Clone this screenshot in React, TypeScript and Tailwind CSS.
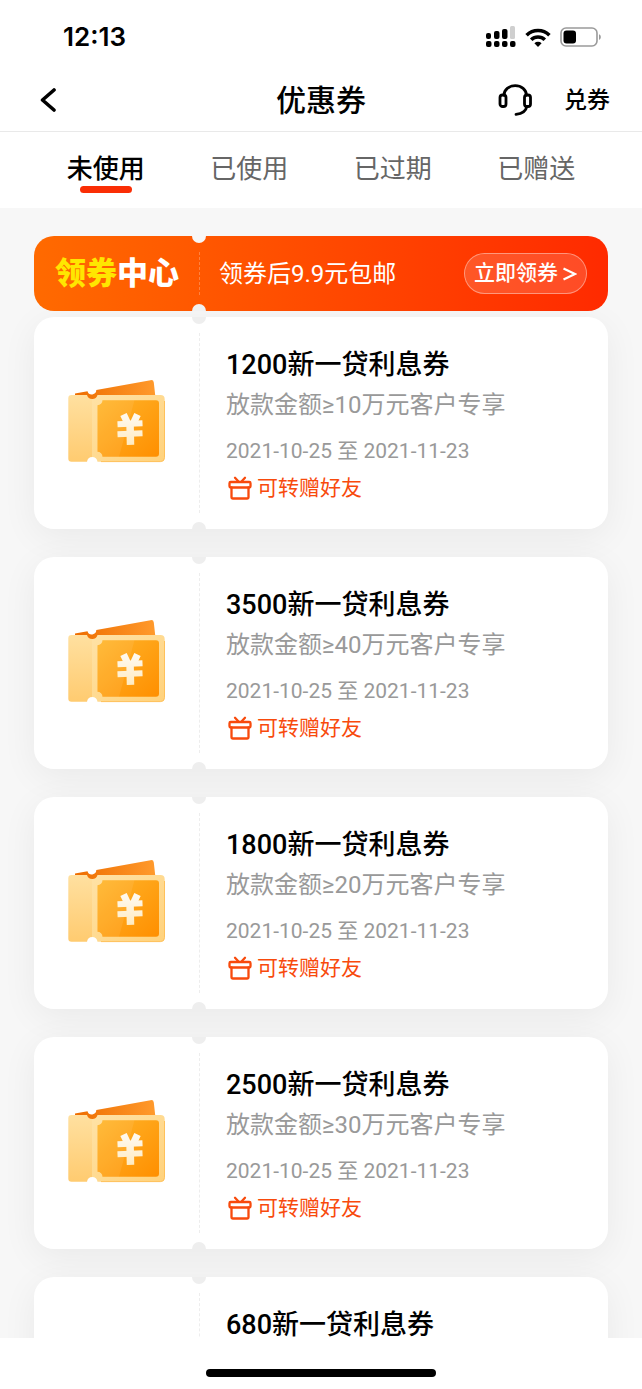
import { useState } from 'react';

const tabs = ['未使用', '已使用', '已过期', '已赠送'];

const coupons = [
  { amount: 1200, limit: 10, start: '2021-10-25', end: '2021-11-23' },
  { amount: 3500, limit: 40, start: '2021-10-25', end: '2021-11-23' },
  { amount: 1800, limit: 20, start: '2021-10-25', end: '2021-11-23' },
  { amount: 2500, limit: 30, start: '2021-10-25', end: '2021-11-23' },
  { amount: 680 }
];

type Coupon = { amount: number; limit?: number; start?: string; end?: string };

const StatusBar = () => (
  <div className="flex h-[74px] shrink-0 items-center justify-between pl-[63px] pr-10">
    <span className="font-['Inter'] text-[26px] font-semibold leading-8">12:13</span>
    <div className="flex items-center gap-[9px]">
      <svg width="31" height="22" viewBox="0 0 31 22" aria-hidden="true">
        <rect x="1" y="7" width="5" height="6" rx="2" />
        <rect x="9" y="5" width="5.5" height="8" rx="2" />
        <rect x="17" y="3" width="5.5" height="10" rx="2" />
        <rect x="25" y="0" width="5" height="13" rx="1.5" fill="#cfcfcf" />
        <rect x="1" y="15" width="5.5" height="6" rx="2" />
        <rect x="9" y="15" width="5.5" height="6" rx="2" />
        <rect x="17" y="15" width="5.5" height="6" rx="2" />
        <rect x="25" y="15" width="5.5" height="6" rx="2" />
      </svg>
      <svg width="26" height="19" viewBox="0 0 26 19" fill="none" stroke="#000" strokeWidth="3.6" aria-hidden="true">
        <path d="M1.6 7.2a16.3 16.3 0 0 1 22.8 0" />
        <path d="M6.2 11.8a9.7 9.7 0 0 1 13.6 0" />
        <path d="M13 19l-3.6-3.8a5.1 5.1 0 0 1 7.2 0z" fill="#000" stroke="none" />
      </svg>
      <svg width="42" height="20" viewBox="0 0 42 20" aria-hidden="true">
        <rect x="1" y="1" width="36" height="18" rx="5" fill="none" stroke="#9a9a9a" strokeWidth="1.6" />
        <rect x="3.5" y="3.5" width="12.5" height="13" rx="3" />
        <path d="M39 7.2c2.4.8 2.4 4.8 0 5.6z" fill="#9a9a9a" />
      </svg>
    </div>
  </div>
);

const Header = () => (
  <header className="grid h-[58px] shrink-0 grid-cols-[1fr_auto_1fr] items-center border-b border-[#e9e9e9] px-8 pb-1">
    <button aria-label="返回" className="justify-self-start pl-[6px]">
      <svg width="20" height="26" viewBox="0 1 20 26" fill="none" stroke="#000" strokeWidth="3.6" strokeLinecap="round" strokeLinejoin="round">
        <path d="M16 3L4.5 13L16 23" />
      </svg>
    </button>
    <h1 className="text-[30px] font-medium leading-10">优惠券</h1>
    <div className="flex items-center gap-8 justify-self-end">
      <button aria-label="客服">
        <svg width="34" height="34" viewBox="0 0 34 34" fill="none" stroke="#000" strokeWidth="2.8" strokeLinecap="round" strokeLinejoin="round">
          <rect x="2" y="11" width="6" height="11.5" rx="2.6" />
          <rect x="26.5" y="11" width="6" height="11.5" rx="2.6" />
          <path d="M6 11.2a11.2 9.6 0 0 1 22.4 0" />
          <path d="M28.8 22.5c-.8 4.500-4.800 7.200-10.800 7.800" />
        </svg>
      </button>
      <button className="text-[23px] font-medium leading-8">兑券</button>
    </div>
  </header>
);

const Divider = ({ line, top, bottom }: { line: string; top: string; bottom: string }) => (
  <>
    <span className={`absolute inset-y-4 left-[165px] border-l border-dashed ${line}`} />
    <span className={`absolute left-[158px] top-0 h-[7px] w-[14px] rounded-b-full ${top}`} />
    <span className={`absolute bottom-0 left-[158px] h-[7px] w-[14px] rounded-t-full ${bottom}`} />
  </>
);

const Banner = () => (
  <section className="relative z-10 flex h-[75px] items-center rounded-[20px] bg-linear-to-r/srgb from-[#ff6a00] to-[#ff2a00] px-[21px] text-white">
    <Divider line="border-white/25" top="bg-[#f7f7f7]" bottom="bg-[#f1f1f1]" />
    <h2 className="w-[164px] shrink-0 text-[31px] font-black leading-10">
      <span className="text-[#ffe600]">领券</span>中心
    </h2>
    <p className="flex-1 text-2xl">领券后9.9元包邮</p>
    <button className="flex h-[41px] items-center gap-[5px] rounded-full border border-white/40 bg-white/15 px-[9px] text-[21px] font-medium">
      立即领券
      <svg width="14" height="14" viewBox="0 0 14 14" fill="none" stroke="currentColor" strokeWidth="2.2" aria-hidden="true">
        <path d="M0.5 1.5L12 7L0.5 12.5" />
      </svg>
    </button>
  </section>
);

const TicketIcon = () => (
  <svg width="98" height="84" viewBox="0 0 98 84" aria-hidden="true">
    <defs>
      <linearGradient id="back" x1="0" y1="0" x2="1" y2="0">
        <stop offset="0" stopColor="#ee6d00" />
        <stop offset="1" stopColor="#ff9a2c" />
      </linearGradient>
      <linearGradient id="stub" x1="0" y1="0" x2="0" y2="1">
        <stop offset="0" stopColor="#ffe0a0" />
        <stop offset="1" stopColor="#ffcb70" />
      </linearGradient>
      <linearGradient id="frame" x1="0" y1="0" x2="1" y2="1">
        <stop offset="0" stopColor="#ffe2a6" />
        <stop offset="1" stopColor="#ffd27c" />
      </linearGradient>
      <linearGradient id="face" x1="0" y1="0" x2="1" y2="1">
        <stop offset="0" stopColor="#ffb52a" />
        <stop offset="1" stopColor="#ff8f00" />
      </linearGradient>
      <linearGradient id="yuan" gradientUnits="userSpaceOnUse" x1="0" y1="35" x2="0" y2="66">
        <stop offset="0" stopColor="#fffaf0" />
        <stop offset="1" stopColor="#ffebc2" />
      </linearGradient>
    </defs>
    <path d="M8 14.5l12.5-2.2a4.5 4.5 0 0 0 8.8-1.2L83.5 1.2q3-.5 3.300 2.200L88.300 17v6H8z" fill="url(#back)" />
    <path d="M4.5 16h15.5a5.5 5.5 0 0 0 5.5 4v58a5.5 5.5 0 0 0-5.5 4.8h-15.5q-3.2 0-3.2-3.2v-60.400q0-3.200 3.200-3.200z" fill="url(#stub)" />
    <path d="M30.5 16h63q4.2 0 4.2 4.2v58.400q0 4.200-4.200 4.200h-63a5.500 5.500 0 0 0-5.500-4.800V20a5.500 5.500 0 0 0 5.500-4z" fill="url(#frame)" />
    <path d="M97.500 22v56.600q0 4-4 4H34" fill="none" stroke="#ffc15a" strokeWidth="1" />
    <path d="M35.500 21.300H89q3 0 3 3v50.400q0 3-3 3H35.500a5 5 0 0 0-5-5V26.300a5 5 0 0 0 5-5z" fill="url(#face)" />
    <path d="M67.500 21.300L52 77.700H35.500a5 5 0 0 0-5-5V26.300a5 5 0 0 0 5-5z" fill="#fff" opacity=".08" />
    <g fill="none" stroke="url(#yuan)">
      <path d="M56.500 35.500l4.500 9.500M70.500 35.500l-4.500 9.500" strokeWidth="7" />
      <path d="M63 43.500L63.500 65.800" strokeWidth="7.5" />
      <path d="M50.500 45.300L75.500 44.300M50.500 55.200L75.500 54.200" strokeWidth="6" />
    </g>
  </svg>
);

const GiftIcon = () => (
  <svg width="24" height="24" viewBox="0 0 24 24" fill="none" stroke="currentColor" strokeWidth="2.3" strokeLinecap="round" strokeLinejoin="round" aria-hidden="true">
    <rect x="1.5" y="6" width="21" height="5.5" rx="1.2" />
    <path d="M3.500 11.500v9.500q0 1.500 1.500 1.500h14q1.500 0 1.500-1.500v-9.500" />
    <path d="M7 1.800l3.500 3.700M17 1.800l-3.500 3.700" />
  </svg>
);

const CouponCard = ({ amount, limit, start, end }: Coupon) => (
  <li className="relative flex min-h-[212px] shrink-0 rounded-[20px] bg-white shadow-[0_8px_36px_rgba(0,0,0,0.06)]">
    <Divider line="border-[#ededed]" top="bg-[#eeeeee]" bottom="bg-[#eeeeee]" />
    <div className="flex w-[165px] shrink-0 items-center justify-center pb-1 pr-[2px]">
      <TicketIcon />
    </div>
    <div className="flex-1 px-[27px] pb-5 pt-9">
      <h3 className="text-[27px] font-medium leading-6 text-black">{amount}新一贷利息券</h3>
      {limit && (
        <>
          <p className="mt-2 text-2xl leading-10 text-[#999999]">放款金额≥{limit}万元客户专享</p>
          <p className="mt-2 text-[21px] leading-9 text-[#999999]">{start} 至 {end}</p>
          <a href="#gift" className="flex items-center gap-[5px] pl-[2px] text-[21px] leading-[38px] text-[#f84a0c]">
            <GiftIcon />
            可转赠好友
          </a>
        </>
      )}
    </div>
  </li>
);

const App = () => {
  const [active, setActive] = useState(0);

  return (
    <div className="flex h-screen flex-col bg-white font-['Roboto','Noto_Sans_CJK_SC',sans-serif] text-black">
      <StatusBar />
      <Header />
      <nav className="grid h-[76px] shrink-0 grid-cols-4 px-[34px]">
        {tabs.map((tab, index) => (
          <button
            key={tab}
            onClick={() => setActive(index)}
            className={`flex flex-col items-center pt-5 text-[26px] leading-[34px] ${active === index ? 'font-medium text-black' : 'text-[#666666]'}`}
          >
            {tab}
            {active === index && <span className="h-[7px] w-[52px] rounded-full bg-[#fa2e05]" />}
          </button>
        ))}
      </nav>

      <main className="min-h-0 flex-1 overflow-y-auto bg-[#f7f7f7] px-[34px] pt-7 [scrollbar-width:none]">
        <Banner />
        <ul className="mt-[6px] flex flex-col gap-7">
          {coupons.map((coupon) => (
            <CouponCard key={coupon.amount} {...coupon} />
          ))}
        </ul>
      </main>

      <footer className="flex h-[51px] shrink-0 justify-center pt-[31px]">
        <span className="h-[8px] w-[230px] rounded-full bg-black" />
      </footer>
    </div>
  );
};

export default App;
